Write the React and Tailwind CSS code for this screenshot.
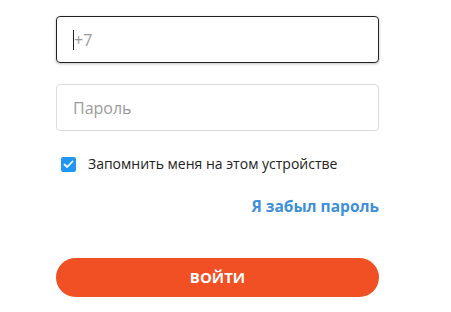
export default function App() {
  return (
    <div className="w-[451px] h-[312px] bg-white overflow-hidden" style={{ fontFamily: '"Open Sans", "Noto Sans", sans-serif' }}>
      <div className="ml-[56px] w-[323px] pt-[16px] flex flex-col">
        <div className="h-[47px] rounded-[4px] border border-[#222] shadow-[0_1px_3px_rgba(0,0,0,0.25)] flex items-center pl-[16px]">
          <span className="w-px h-[20px] bg-[#222]"></span>
          <span className="text-[16px] text-[#9a9a9a] leading-none">+7</span>
        </div>
        <div className="mt-[21px] h-[47px] rounded-[4px] border border-[#dcdcdc] flex items-center pl-[16px]">
          <span className="text-[16px] text-[#9a9a9a] leading-none">Пароль</span>
        </div>
        <div className="mt-[25px] flex items-center h-[16px] pl-[5px]">
          <span className="w-[15px] h-[15px] rounded-[2px] bg-[#2196f3] flex items-center justify-center">
            <svg width="11" height="9" viewBox="0 0 11 9" fill="none">
              <path d="M1.5 4.5 L4.2 7 L9.5 1.5" stroke="white" strokeWidth="1.8" strokeLinecap="round" strokeLinejoin="round" />
            </svg>
          </span>
          <span className="ml-[12px] text-[14px] text-[#222] leading-none">Запомнить меня на этом устройстве</span>
        </div>
        <div className="mt-[27px] flex justify-end">
          <span className="text-[15.5px] font-bold text-[#3d8fd8] leading-none">Я забыл пароль</span>
        </div>
        <button className="mt-[43px] h-[39px] rounded-full bg-[#f05023] text-white text-[15px] font-bold leading-none">ВОЙТИ</button>
      </div>
    </div>
  );
}
